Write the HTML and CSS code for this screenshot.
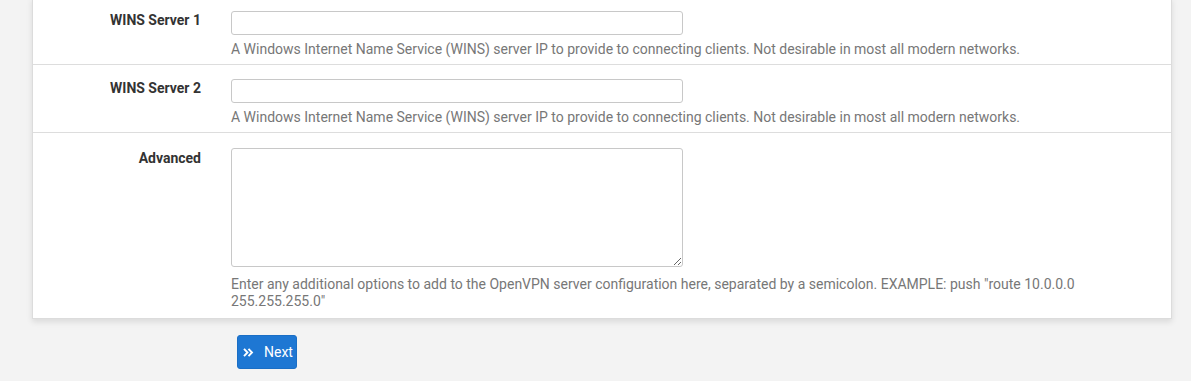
FILE: index.html
```html
<!DOCTYPE html>
<html>
<head>
<meta charset="utf-8">
<link rel="stylesheet" href="styles.css">
</head>
<body>
<div class="page">
  <div class="panel">
    <div class="row">
      <label class="label">WINS Server 1</label>
      <div class="field">
        <input class="input" type="text">
        <div class="help">A Windows Internet Name Service (WINS) server IP to provide to connecting clients. Not desirable in most all modern networks.</div>
      </div>
    </div>
    <div class="row">
      <label class="label">WINS Server 2</label>
      <div class="field">
        <input class="input" type="text">
        <div class="help">A Windows Internet Name Service (WINS) server IP to provide to connecting clients. Not desirable in most all modern networks.</div>
      </div>
    </div>
    <div class="row row-last">
      <label class="label label-ta">Advanced</label>
      <div class="field">
        <textarea class="textarea"></textarea>
        <div class="help help-ta">Enter any additional options to add to the OpenVPN server configuration here, separated by a semicolon. EXAMPLE: push "route 10.0.0.0 255.255.255.0"</div>
      </div>
    </div>
  </div>
  <div class="actions">
    <button class="btn" type="button">
      <svg class="icon" width="11" height="11" viewBox="0 0 11 11"><path d="M1 1.8 L4.5 5.5 L1 9.2 M5.5 1.8 L9 5.5 L5.5 9.2" fill="none" stroke="#fff" stroke-width="1.9"/></svg>
      <span>Next</span>
    </button>
  </div>
</div>
</body>
</html>
```
FILE: styles.css
```css
html, body {
  margin: 0;
  padding: 0;
  background: #f3f3f3;
  font-family: Roboto, "Liberation Sans", sans-serif;
  font-size: 14px;
  color: #333;
  overflow: hidden;
}
.page {
  padding-left: 32px;
  padding-right: 19px;
}
.panel {
  margin-top: -3px;
  background: #fff;
  border: 1px solid #dcdcdc;
  border-top: none;
  box-shadow: 0 3px 6px rgba(0,0,0,0.10);
}
.row {
  display: flex;
  border-bottom: 1px solid #dddddd;
  padding: 14px 15px 6px 0;
}
.row-last {
  border-bottom: none;
  padding-top: 15px;
  padding-bottom: 8px;
}
.label {
  width: 168px;
  flex: none;
  text-align: right;
  font-weight: bold;
  font-size: 14px;
  line-height: 17px;
  padding-top: 1px;
  color: #333;
}
.label-ta {
  padding-top: 2px;
}
.field {
  margin-left: 30px;
  flex: 1;
  display: flex;
  flex-direction: column;
  align-items: flex-start;
}
.input {
  width: 452px;
  height: 24px;
  box-sizing: border-box;
  border: 1px solid #c8c8c8;
  border-radius: 3px;
  margin: 0;
  padding: 2px 6px;
  background: #fff;
  outline: none;
}
.textarea {
  width: 452px;
  height: 119px;
  box-sizing: border-box;
  border: 1px solid #c8c8c8;
  border-radius: 3px;
  margin: 0;
  padding: 4px 6px;
  background: #fff;
  outline: none;
  display: block;
}
.help {
  margin-top: 6px;
  font-size: 14px;
  line-height: 17px;
  color: #777;
}
.help-ta {
  margin-top: 9px;
}
.actions {
  padding-left: 205px;
  padding-top: 16px;
}
.btn {
  display: flex;
  align-items: center;
  gap: 10px;
  height: 34px;
  padding: 0 3px 0 5px;
  background: #1e77d3;
  border: 1px solid #1a6ec5;
  border-radius: 3px;
  color: #fff;
  font-family: Roboto, "Liberation Sans", sans-serif;
  font-size: 14px;
  cursor: pointer;
}
.icon {
  display: block;
}
```
